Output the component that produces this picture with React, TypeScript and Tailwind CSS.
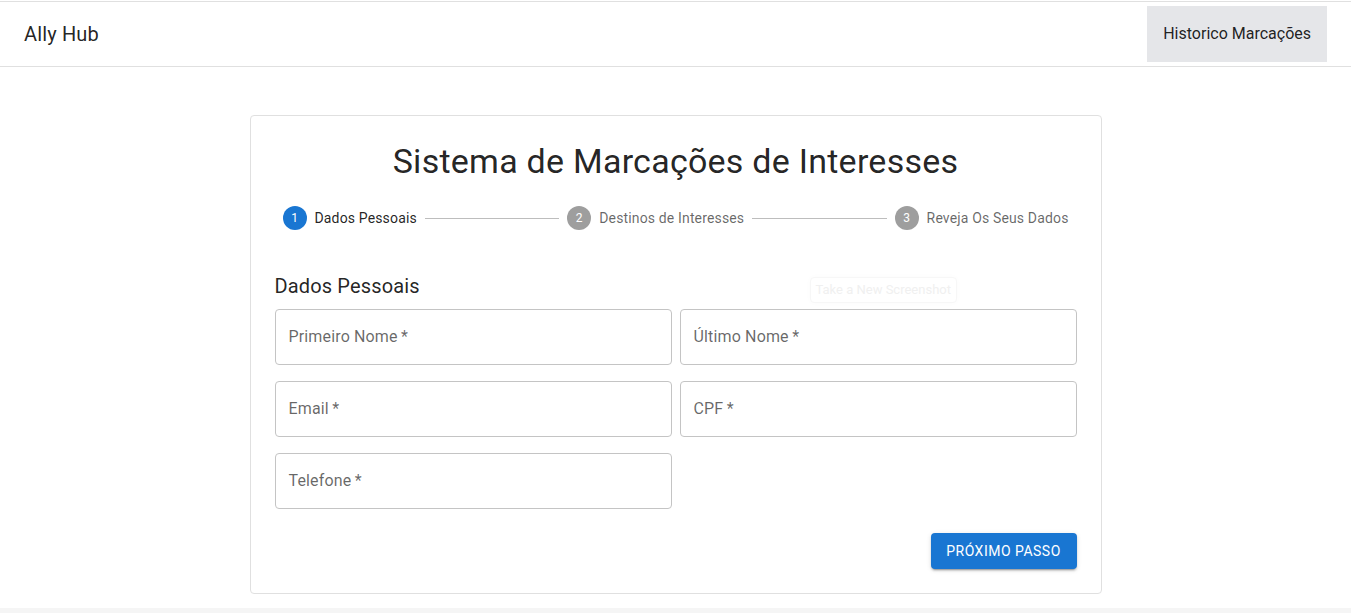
import React from 'react';

const steps = ['Dados Pessoais', 'Destinos de Interesses', 'Reveja Os Seus Dados'];

const fields = ['Primeiro Nome', 'Último Nome', 'Email', 'CPF', 'Telefone'];

const App: React.FC = () => {
  return (
    <div className="min-h-screen bg-white font-['Roboto','Helvetica',sans-serif] text-[rgba(0,0,0,0.87)]">
      {/* Header */}
      <header className="mt-px flex h-[66px] items-center justify-between border-y border-[#e0e0e0] pl-6 pr-6">
        <span className="text-[20px] leading-8 tracking-[0.15px]">Ally Hub</span>
        <button className="h-14 bg-[#e5e6e9] px-4 text-[16px] leading-6">Historico Marcações</button>
      </header>

      {/* Card */}
      <main className="relative mx-auto mt-12 w-[852px] rounded border border-[#e0e0e0] bg-white p-6">
        <h1 className="text-center text-[34px] leading-[42px] tracking-[0.25px]">Sistema de Marcações de Interesses</h1>

        {/* Stepper */}
        <div className="mt-6 flex items-center">
          {steps.map((label, i) => (
            <React.Fragment key={label}>
              {i > 0 && <div className="flex-1 border-t border-[#bdbdbd]" />}
              <div className="flex items-center px-2">
                <span
                  className={`flex h-6 w-6 items-center justify-center rounded-full text-[12px] text-white ${
                    i === 0 ? 'bg-[#1976d2]' : 'bg-[#9e9e9e]'
                  }`}
                >
                  {i + 1}
                </span>
                <span
                  className={`pl-2 text-[14px] leading-5 tracking-[0.15px] ${
                    i === 0 ? 'text-[rgba(0,0,0,0.87)]' : 'text-[rgba(0,0,0,0.6)]'
                  }`}
                >
                  {label}
                </span>
              </div>
            </React.Fragment>
          ))}
        </div>

        <h2 className="mt-10 mb-[7px] text-[20px] leading-8 tracking-[0.15px]">Dados Pessoais</h2>

        {/* Form */}
        <div className="grid grid-cols-2 gap-x-2 gap-y-4">
          {fields.map((f) => (
            <div
              key={f}
              className="flex h-14 items-center rounded border border-[#c4c4c4] px-[13px] text-[16px] tracking-[0.15px] text-[rgba(0,0,0,0.6)]"
            >
              {f}&thinsp;*
            </div>
          ))}
        </div>

        <div className="mt-6 flex justify-end">
          <button className="h-9 w-[146px] rounded bg-[#1976d2] text-[14px] font-normal uppercase tracking-[0.5px] text-white shadow-[0_3px_1px_-2px_rgba(0,0,0,0.2),0_2px_2px_0_rgba(0,0,0,0.14),0_1px_5px_0_rgba(0,0,0,0.12)]">
            Próximo Passo
          </button>
        </div>

        {/* faint overlay left by screenshot tool */}
        <div className="absolute left-[559px] top-[161px] rounded border border-[#f7f7f7] px-[5px] py-[2px] text-[13px] text-[#f0f0f0] shadow-[0_0_6px_rgba(0,0,0,0.02)]">
          Take a New Screenshot
        </div>
      </main>

      <div className="mt-[14px] h-6 bg-[#f5f5f5]" />
    </div>
  );
};

export default App;
